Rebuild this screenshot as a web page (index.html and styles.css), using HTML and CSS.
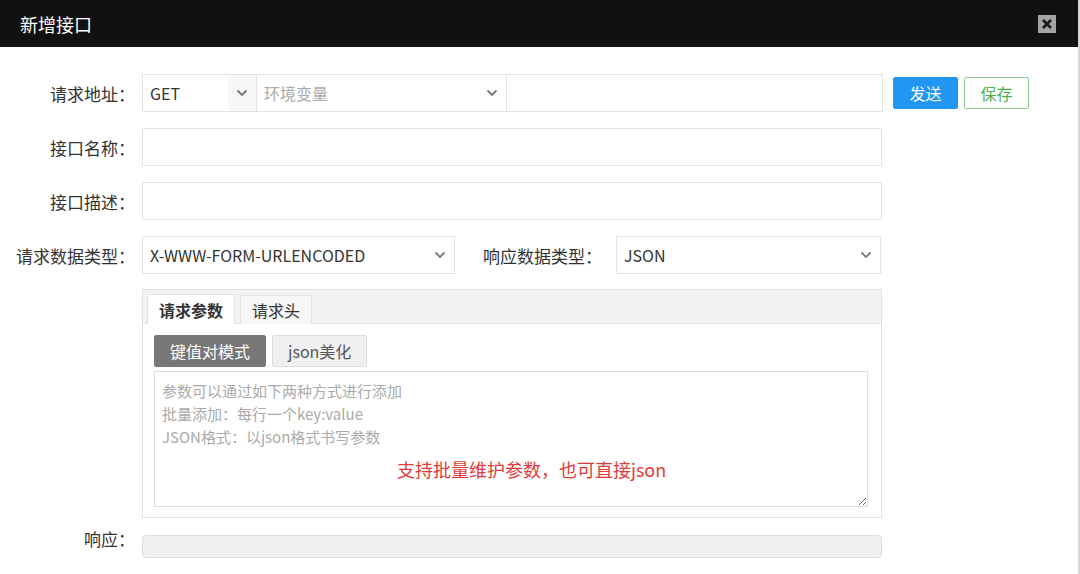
FILE: index.html
```html
<!DOCTYPE html>
<html lang="zh-CN">
<head>
    <meta charset="UTF-8">
    <meta name="viewport" content="width=device-width, initial-scale=1.0">
    <title>新增接口</title>
    <link rel="stylesheet" href="styles.css">
</head>
<body>
    <div class="dialog">
        <div class="dialog-title">
            <span>新增接口</span>
            <span class="close">
                <svg width="12" height="12" viewBox="0 0 12 12"><path d="M2 2L10 10M10 2L2 10" stroke="#1a1a1a" stroke-width="2.6"/></svg>
            </span>
        </div>

        <div class="dialog-body">
            <div class="row">
                <label class="label">请求地址：</label>
                <div class="select method">
                    <span>GET</span>
                    <svg class="arrow" width="12" height="8" viewBox="0 0 12 8"><path d="M1.5 1.5L6 6L10.5 1.5" fill="none" stroke="#777" stroke-width="1.8"/></svg>
                </div>
                <div class="select env">
                    <span class="placeholder">环境变量</span>
                    <svg class="arrow" width="12" height="8" viewBox="0 0 12 8"><path d="M1.5 1.5L6 6L10.5 1.5" fill="none" stroke="#777" stroke-width="1.8"/></svg>
                </div>
                <input class="input url" type="text">
                <button class="btn btn-send">发送</button>
                <button class="btn btn-save">保存</button>
            </div>

            <div class="row">
                <label class="label">接口名称：</label>
                <input class="input wide" type="text">
            </div>

            <div class="row">
                <label class="label">接口描述：</label>
                <input class="input wide" type="text">
            </div>

            <div class="row">
                <label class="label">请求数据类型：</label>
                <div class="select req-type">
                    <span>X-WWW-FORM-URLENCODED</span>
                    <svg class="arrow" width="12" height="8" viewBox="0 0 12 8"><path d="M1.5 1.5L6 6L10.5 1.5" fill="none" stroke="#777" stroke-width="1.8"/></svg>
                </div>
                <label class="label-inline">响应数据类型：</label>
                <div class="select res-type">
                    <span>JSON</span>
                    <svg class="arrow" width="12" height="8" viewBox="0 0 12 8"><path d="M1.5 1.5L6 6L10.5 1.5" fill="none" stroke="#777" stroke-width="1.8"/></svg>
                </div>
            </div>

            <div class="row panel-row">
                <div class="label"></div>
                <div class="panel">
                    <div class="tabs">
                        <span class="tab active">请求参数</span>
                        <span class="tab">请求头</span>
                    </div>
                    <div class="panel-body">
                        <div class="modes">
                            <button class="mode active">键值对模式</button>
                            <button class="mode">json美化</button>
                        </div>
                        <div class="editor">
                            <textarea placeholder="参数可以通过如下两种方式进行添加&#10;批量添加：每行一个key:value&#10;JSON格式：以json格式书写参数"></textarea>
                            <span class="note">支持批量维护参数，也可直接json</span>
                        </div>
                    </div>
                </div>
            </div>

            <div class="row response-row">
                <label class="label">响应：</label>
                <div class="response"></div>
            </div>
        </div>
    </div>
</body>
</html>
```

FILE: styles.css
```css
* {
    box-sizing: border-box;
}

body {
    margin: 0;
    font-family: "Noto Sans CJK SC", "Liberation Sans", sans-serif;
    color: #333;
    background: #fff;
}

.dialog {
    width: 1080px;
    height: 574px;
    border-right: 2px solid #d8d8d8;
    overflow: hidden;
}

.dialog-title {
    height: 47px;
    background: #111;
    color: #fff;
    font-size: 18px;
    padding: 0 22px 0 20px;
    display: flex;
    align-items: center;
    justify-content: space-between;
}

.close {
    width: 18px;
    height: 18px;
    background: #a3a3a3;
    display: flex;
    align-items: center;
    justify-content: center;
}

.dialog-body {
    padding-top: 27px;
}

.row {
    display: flex;
    align-items: center;
    margin-bottom: 16px;
}

.label {
    width: 142px;
    flex: none;
    text-align: right;
    padding-right: 7px;
    font-size: 17px;
    color: #333;
}

.label-inline {
    width: 161px;
    text-align: right;
    padding-right: 14px;
    font-size: 17px;
}

.select, .input {
    height: 38px;
    border: 1px solid #e3e3e3;
    background: #fff;
    font-size: 16px;
    color: #333;
    font-family: inherit;
}

.select {
    display: flex;
    align-items: center;
    justify-content: space-between;
    padding: 0 8px 0 7px;
}

.method {
    width: 115px;
    background: linear-gradient(to right, #fff 75%, #f7f7f7 75%);
}

.env {
    width: 250px;
    border-left: none;
}

.placeholder {
    color: #aaa;
}

.url {
    width: 376px;
    border-left: none;
    outline: none;
}

.wide {
    width: 740px;
}

.req-type {
    width: 313px;
}

.res-type {
    width: 265px;
}

.btn {
    height: 32px;
    width: 65px;
    font-family: inherit;
    font-size: 16px;
    border-radius: 2px;
    cursor: pointer;
}

.btn-send {
    margin-left: 10px;
    background: #2196f3;
    border: 1px solid #2196f3;
    color: #fff;
}

.btn-save {
    margin-left: 6px;
    background: #fff;
    border: 1px solid #8fc98f;
    color: #4caf50;
}

.panel-row {
    margin-top: -1px;
    margin-bottom: 17px;
    align-items: flex-start;
}

.panel {
    width: 740px;
    height: 229px;
    border: 1px solid #e2e2e2;
}

.tabs {
    height: 34px;
    background: #f2f2f2;
    border-bottom: 1px solid #e2e2e2;
    display: flex;
    align-items: flex-end;
    padding-left: 4px;
    gap: 5px;
}

.tab {
    height: 29px;
    padding: 0 11px;
    font-size: 16px;
    display: flex;
    align-items: center;
    border: 1px solid #e2e2e2;
    border-bottom: none;
    background: #f7f7f7;
    margin-bottom: -1px;
}

.tab.active {
    background: #fff;
    font-weight: bold;
    height: 30px;
}

.panel-body {
    padding: 11px 13px 10px 11px;
}

.modes {
    display: flex;
    gap: 6px;
    margin-bottom: 4px;
}

.mode {
    height: 32px;
    padding: 0 15px;
    font-family: inherit;
    font-size: 16px;
    border: 1px solid #ddd;
    background: #f0f0f0;
    color: #555;
    border-radius: 2px;
}

.mode.active {
    background: #777;
    border-color: #777;
    color: #fff;
}

.editor {
    position: relative;
}

.editor textarea {
    display: block;
    width: 714px;
    height: 136px;
    border: 1px solid #ddd;
    font-family: inherit;
    font-size: 15px;
    line-height: 23px;
    padding: 7px 7px;
    resize: vertical;
    outline: none;
}

.editor textarea::placeholder {
    color: #aaa;
}

.note {
    position: absolute;
    left: 243px;
    top: 85px;
    color: #e23a3a;
    font-size: 18px;
}

.response-row {
    align-items: flex-start;
}

.response-row .label {
    margin-top: -9px;
}

.response {
    width: 740px;
    height: 23px;
    background: #f0f0f0;
    border: 1px solid #ddd;
    border-radius: 4px;
}
```
